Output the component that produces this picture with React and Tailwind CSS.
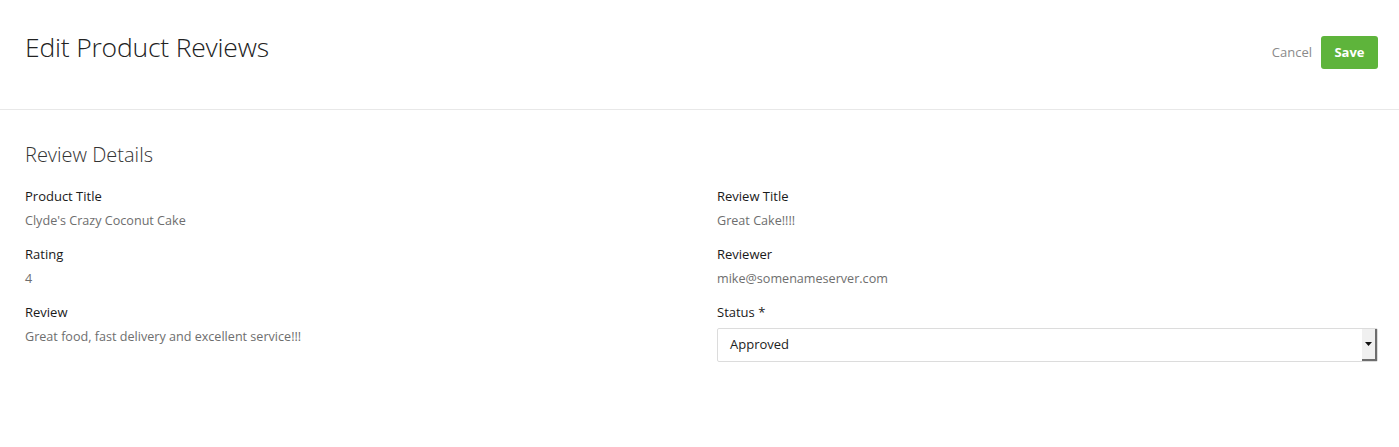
export default function App() {
  const left = [
    { label: "Product Title", value: "Clyde's Crazy Coconut Cake" },
    { label: "Rating", value: "4" },
    { label: "Review", value: "Great food, fast delivery and excellent service!!!" },
  ];
  const right = [
    { label: "Review Title", value: "Great Cake!!!!" },
    { label: "Reviewer", value: "mike@somenameserver.com" },
  ];

  return (
    <div className="min-h-screen bg-white font-['Open_Sans',sans-serif] text-[#222]">
      {/* Header */}
      <header className="h-[110px] border-b border-[#e8e8e8] flex items-center justify-between pl-[25px] pr-[21px]">
        <h1 className="text-[26.5px] font-light text-[#222] tracking-[-0.2px] -mt-[14px]">Edit Product Reviews</h1>
        <div className="flex items-center gap-[9px] -mt-[4px]">
          <button className="text-[13px] text-[#8a8a8a]">Cancel</button>
          <button className="h-[33px] w-[57px] rounded-[3px] bg-[#5eb43b] text-white text-[13px] font-bold">Save</button>
        </div>
      </header>

      {/* Details */}
      <section className="pl-[25px] pr-[21px] pt-[32px]">
        <h2 className="text-[20px] font-light text-[#333] leading-[26px]">Review Details</h2>
        <div className="grid grid-cols-2 gap-x-[31px] mt-[19px]">
          <div className="flex flex-col gap-[15px]">
            {left.map((f) => (
              <Field key={f.label} {...f} />
            ))}
          </div>
          <div className="flex flex-col gap-[15px]">
            {right.map((f) => (
              <Field key={f.label} {...f} />
            ))}
            <div>
              <div className="text-[13px] leading-[18px] text-[#1a1a1a]">Status *</div>
              <div className="mt-[7px] h-[34px] border border-[#dcdcdc] rounded-[2px] flex items-center justify-between pl-[12px]">
                <span className="text-[13px] text-[#222]">Approved</span>
                <span className="h-[32px] w-[15px] bg-[#f0f0f0] border-r-2 border-b-2 border-[#6d6d6d] flex items-center justify-center">
                  <svg width="7" height="4" viewBox="0 0 7 4"><path d="M0 0h7L3.5 4z" fill="#111" /></svg>
                </span>
              </div>
            </div>
          </div>
        </div>
      </section>
    </div>
  );
}

function Field({ label, value }) {
  return (
    <div>
      <div className="text-[13px] leading-[18px] text-[#1a1a1a]">{label}</div>
      <div className="mt-[7px] text-[12.6px] leading-[18px] text-[#6e6e6e]">{value}</div>
    </div>
  );
}
